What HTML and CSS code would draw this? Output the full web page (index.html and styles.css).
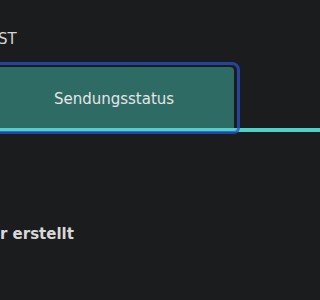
FILE: index.html
```html
<!DOCTYPE html>
<html lang="de">
<head>
<meta charset="utf-8">
<link rel="stylesheet" href="styles.css">
</head>
<body>
<div class="page">
  <h1 class="title">ST</h1>
  <div class="tabs" role="tablist">
    <button class="tab" role="tab" aria-selected="true">Sendungsstatus</button>
  </div>
  <p class="note">r erstellt</p>
</div>
</body>
</html>
```
FILE: styles.css
```css
html, body {
  margin: 0;
  padding: 0;
  background: #1b1c1e;
  overflow: hidden;
}
.page {
  padding-top: 30px;
  font-family: "DejaVu Sans", "Liberation Sans", sans-serif;
}
.title {
  margin: 0 0 0 -2px;
  font-size: 15px;
  line-height: 18px;
  font-weight: normal;
  color: #d6d6d6;
}
.tabs {
  display: flex;
  margin-top: 19px;
  border-bottom: 4px solid #4fd1c5;
}
.tab {
  position: relative;
  box-sizing: border-box;
  width: 240px;
  height: 61px;
  margin: 0 0 0 -6px;
  padding: 3px 0 0 0;
  border: 0;
  border-radius: 4px 4px 0 0;
  background: #2e6b64;
  color: #e4e6e8;
  font-family: "DejaVu Sans", "Liberation Sans", sans-serif;
  font-size: 15px;
  line-height: 18px;
  display: flex;
  align-items: center;
  justify-content: center;
}
.tab::after {
  content: "";
  position: absolute;
  top: -5px;
  right: -6px;
  bottom: -6px;
  left: -5px;
  border: 3px solid rgba(40, 80, 200, 0.78);
  border-radius: 8px 8px 6px 6px;
  pointer-events: none;
}
.note {
  margin: 93px 0 0 0;
  font-size: 15px;
  line-height: 18px;
  font-weight: bold;
  color: #d8d8d8;
}
```
